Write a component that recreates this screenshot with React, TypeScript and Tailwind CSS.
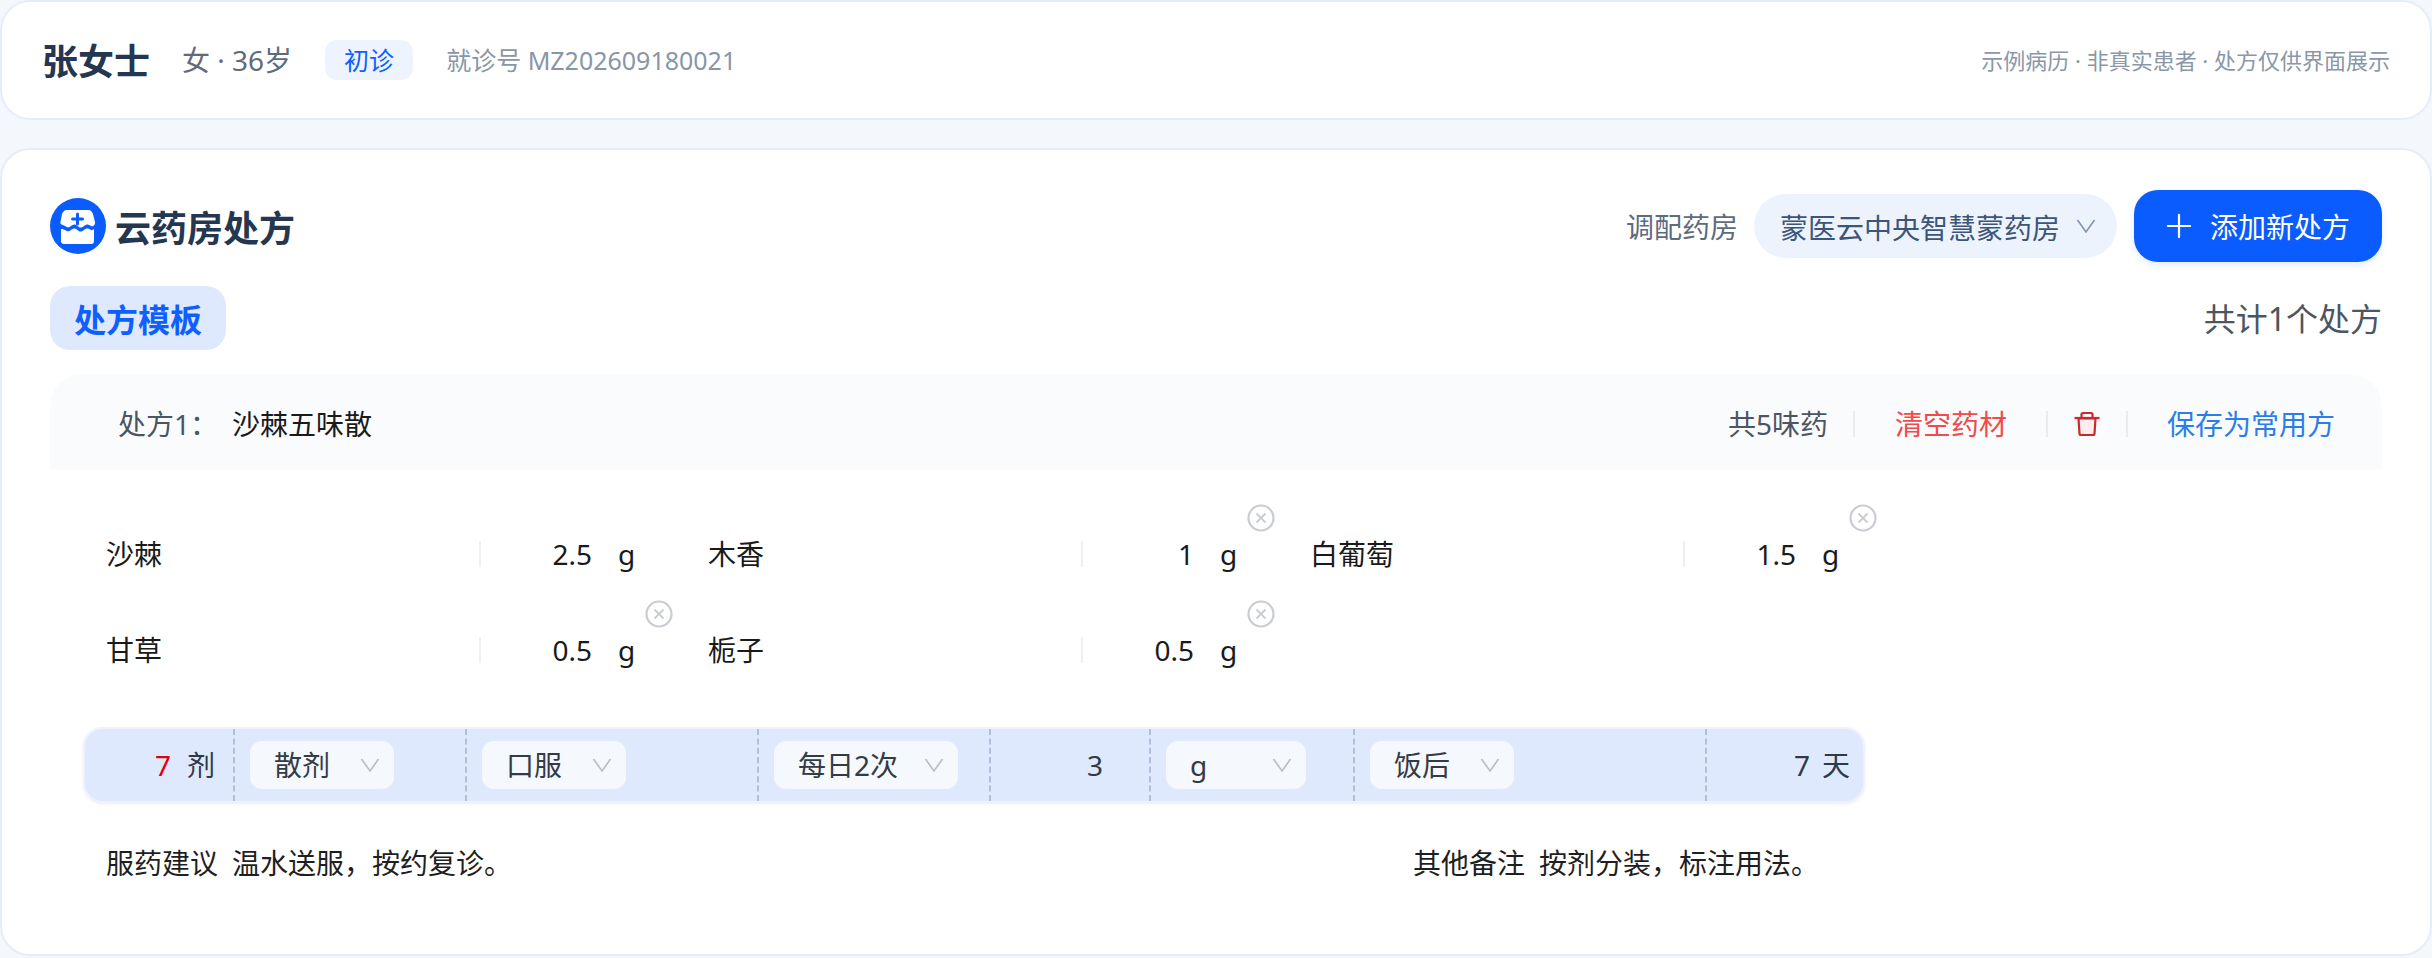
import { Plus } from "lucide-react";

const font = "font-['Noto_Sans','Noto_Sans_CJK_SC',sans-serif]";

const herbs = [
  { name: "沙棘", dose: "2.5", close: false },
  { name: "木香", dose: "1", close: true },
  { name: "白葡萄", dose: "1.5", close: true },
  { name: "甘草", dose: "0.5", close: true },
  { name: "栀子", dose: "0.5", close: true },
];

function Chevron({ className }: { className: string }) {
  return (
    <svg viewBox="0 0 20 14" className={className} fill="none" stroke="currentColor" strokeWidth="1.6">
      <path d="M1.5 1 L10 13 L18.5 1" />
    </svg>
  );
}

function Logo() {
  return (
    <svg viewBox="0 0 56 56" className="h-14 w-14 shrink-0">
      <circle cx="28" cy="28" r="28" fill="#0b5cff" />
      <path
        fill="#fff"
        d="M17 12H38C41 12 42 14 43 16L45 24C45.5 27 43 29 41 28C38 26 36.5 26 34 28C31 30 30 30 27.5 28C25 26 24 26 21 28C18.5 30 17.5 29.5 15 28C12.5 26.5 10 27 10.5 24L12 16C13 14 14 12 17 12Z"
      />
      <path
        fill="#fff"
        d="M11 31C12.5 31 14 31.5 15 32C17.5 33.5 18.5 34 21 32C24 30 25 30 27.5 32C30 34 31 34 34 32C36.5 30 38 30 41 32C42 32.5 43 32 44 31V43C44 45 43 46 41 46H14C12 46 11 45 11 43Z"
      />
      <path d="M27.5 16V26M22.5 21H32.5" stroke="#0b5cff" strokeWidth="3" strokeLinecap="round" />
    </svg>
  );
}

function Trash() {
  return (
    <svg viewBox="0 0 26 26" className="h-[26px] w-[26px]" fill="none" stroke="#cb2a2a" strokeWidth="2.2">
      <path d="M4.5 7.5h17l-1 15c0 1-.5 1.5-1.5 1.5H7c-1 0-1.5-.5-1.5-1.5z" fill="#ffecec" />
      <path d="M.5 7h25" />
      <path d="M7.5 7V3.5C7.5 2.5 8 2 9 2h8c1 0 1.5.5 1.5 1.5V7" />
    </svg>
  );
}

function CloseDot() {
  return (
    <span className="absolute left-[539px] top-[-2px] h-7 w-7">
      <svg viewBox="0 0 28 28" className="h-7 w-7" fill="none" stroke="#c9cdd3" strokeWidth="2.2">
        <circle cx="14" cy="14" r="12.5" />
        <path d="M9.5 9.5l9 9M18.5 9.5l-9 9" strokeWidth="1.8" />
      </svg>
    </span>
  );
}

function Herb({ name, dose, close }: { name: string; dose: string; close: boolean }) {
  return (
    <div className="relative flex h-24 items-center text-[28px] leading-10 text-[#1a1a1a]">
      {close && <CloseDot />}
      <span className="w-[373px]">{name}</span>
      <span className="h-[26px] w-0.5 bg-[#eef0f3]" />
      <span className="w-[111px] text-right">{dose}</span>
      <span className="ml-[26px]">g</span>
    </div>
  );
}

function BarSelect({ label, width }: { label: string; width: string }) {
  return (
    <div className={`flex h-12 items-center justify-between rounded-xl bg-[#f5f8fd] pl-6 pr-[14px] text-[28px] leading-10 text-[#333b47] ${width}`}>
      <span>{label}</span>
      <Chevron className="h-[14px] w-5 text-[#b9bdc5]" />
    </div>
  );
}

export default function App() {
  return (
    <div className={`${font} flex h-[958px] flex-col gap-7 bg-[#f4f7fc] pb-0.5`}>
      <header className="flex h-[120px] shrink-0 items-center justify-between rounded-[30px] border-2 border-[#e6edf8] bg-white pl-10 pr-10">
        <div className="flex items-center">
          <h1 className="pt-[3px] text-[36px] font-bold leading-[48px] text-[#243650]">张女士</h1>
          <span className="ml-8 text-[28px] leading-10 text-[#5f6b7a]">女 · 36岁</span>
          <span className="ml-[33px] flex h-10 w-[88px] items-center justify-center rounded-xl bg-[#eef4ff] text-[25px] leading-9 text-[#0f5fff]">初诊</span>
          <span className="ml-[33px] text-[25px] leading-9 text-[#8896a8]">就诊号 MZ202609180021</span>
        </div>
        <span className="text-[22px] leading-8 text-[#8a97a8]">示例病历 · 非真实患者 · 处方仅供界面展示</span>
      </header>

      <main className="flex min-h-0 flex-1 flex-col rounded-[30px] border-2 border-[#e6edf8] bg-white px-12 pt-10">
        <div className="flex h-[72px] items-center justify-between">
          <div className="flex items-center gap-[9px]">
            <Logo />
            <h2 className="pt-[5px] text-[36px] font-bold leading-[48px] text-[#243650]">云药房处方</h2>
          </div>
          <div className="flex items-center">
            <span className="pt-[2px] text-[28px] leading-10 text-[#5d6b7e]">调配药房</span>
            <div className="ml-4 flex h-16 w-[363px] items-center justify-between rounded-full bg-[#edf3fd] pl-[26px] pr-[21px] text-[28px] leading-10 text-[#3d5578]">
              <span className="pt-1">蒙医云中央智慧蒙药房</span>
              <Chevron className="h-[14px] w-5 text-[#7e95b8]" />
            </div>
            <button className="ml-[17px] flex h-[72px] w-[248px] items-center rounded-3xl bg-[#0b5cff] pl-[26px] text-[28px] leading-10 text-white shadow-[0_3px_6px_rgba(11,92,255,0.12)]">
              <Plus className="h-[38px] w-[38px]" strokeWidth={1.4} />
              <span className="ml-3 pt-[2px]">添加新处方</span>
            </button>
          </div>
        </div>

        <div className="mt-6 flex h-16 items-center justify-between">
          <span className="flex h-16 w-[176px] items-center justify-center rounded-[20px] bg-[#dfe9fd] pt-[3px] text-[32px] font-bold leading-10 text-[#0f5fff]">处方模板</span>
          <span className="pt-[2px] text-[32px] leading-10 text-[#4b5563]">共计1个处方</span>
        </div>

        <div className="mt-6 flex h-24 items-center justify-between rounded-t-[32px] bg-[#f9fbfd] pl-[68px] pr-[47px] pt-[3px] text-[28px] leading-10">
          <div className="flex items-center">
            <span className="w-[114px] text-[#4b5563]">处方1：</span>
            <span className="text-[#1a1a1a]">沙棘五味散</span>
          </div>
          <div className="flex items-center">
            <span className="text-[#4b5563]">共5味药</span>
            <span className="ml-[25px] h-[26px] w-0.5 bg-[#e9ebef]" />
            <span className="ml-[40px] text-[#f04a4a]">清空药材</span>
            <span className="ml-[39px] h-[26px] w-0.5 bg-[#e9ebef]" />
            <span className="ml-[26px]"><Trash /></span>
            <span className="ml-[26px] h-[26px] w-0.5 bg-[#e9ebef]" />
            <span className="ml-[39px] text-[#2b7de9]">保存为常用方</span>
          </div>
        </div>

        <div className="mt-[36px] grid grid-cols-[repeat(3,602px)] pl-14">
          {herbs.map((h) => (
            <Herb key={h.name} name={h.name} dose={h.dose} close={h.close} />
          ))}
        </div>

        <div className="ml-[33px] mt-[29px] flex h-[76px] w-[1782px] items-center rounded-[20px] border-2 border-[#edf2fc] bg-[#dfe9fd] text-[28px] leading-10 text-[#2f3947] shadow-[0_1px_3px_rgba(120,140,180,0.15)]">
          <div className="flex h-full w-[148px] items-center justify-end gap-4 pr-[18px]">
            <span className="text-[#e00012]">7</span>
            <span>剂</span>
          </div>
          <div className="flex h-full w-[232px] items-center border-l-2 border-dashed border-[#b1bfdc] pl-[15px]">
            <BarSelect label="散剂" width="w-[144px]" />
          </div>
          <div className="flex h-full w-[292px] items-center border-l-2 border-dashed border-[#b1bfdc] pl-[15px]">
            <BarSelect label="口服" width="w-[144px]" />
          </div>
          <div className="flex h-full w-[232px] items-center border-l-2 border-dashed border-[#b1bfdc] pl-[15px]">
            <BarSelect label="每日2次" width="w-[184px]" />
          </div>
          <div className="flex h-full w-[160px] items-center justify-end border-l-2 border-dashed border-[#b1bfdc] pr-[46px]">3</div>
          <div className="flex h-full w-[204px] items-center border-l-2 border-dashed border-[#b1bfdc] pl-[15px]">
            <BarSelect label="g" width="w-[140px]" />
          </div>
          <div className="flex h-full w-[352px] items-center border-l-2 border-dashed border-[#b1bfdc] pl-[15px]">
            <BarSelect label="饭后" width="w-[144px]" />
          </div>
          <div className="flex h-full flex-1 items-center justify-end gap-3 border-l-2 border-dashed border-[#b1bfdc] pr-[13px]">
            <span>7</span>
            <span>天</span>
          </div>
        </div>

        <div className="mt-10 flex pl-14 text-[28px] leading-10 text-[#1f1f1f]">
          <div className="flex w-[1307px] gap-[14px]">
            <span>服药建议</span>
            <span>温水送服，按约复诊。</span>
          </div>
          <div className="flex gap-[14px]">
            <span>其他备注</span>
            <span>按剂分装，标注用法。</span>
          </div>
        </div>
      </main>
    </div>
  );
}
